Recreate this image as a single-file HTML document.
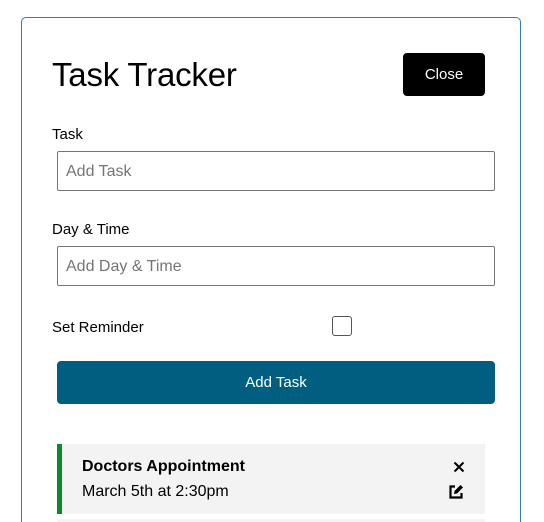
<!DOCTYPE html>
<html style="width:544px;height:522px;overflow:hidden"><head><style>
*{box-sizing:border-box;margin:0;padding:0}
body{width:544px;height:522px;overflow:hidden;background:#fff;font-family:"Liberation Sans",sans-serif;color:#000;position:relative}
.c{position:absolute;left:21px;top:17px;width:500px;height:520px;border:1px solid #2f7fb3;border-radius:5px}
.a{position:absolute}
h1{position:absolute;left:52px;top:56px;font-size:33px;font-weight:400;letter-spacing:-0.2px}
.close{left:403px;top:53px;width:82px;height:43px;background:#000;color:#fff;border-radius:4px;font-size:15px;text-align:center;line-height:44px}
.lbl{left:52px;font-size:15px}
.in{left:57px;width:438px;height:40px;border:1px solid #767676;border-radius:2px;font-size:16px;color:#757575;padding-left:8px;line-height:39px}
.btn{left:57px;top:361px;width:438px;height:43px;background:#005f80;color:#fff;border-radius:4px;font-size:15px;text-align:center;line-height:44px}
.task{left:57px;top:444px;width:428px;height:70px;background:#f3f3f3;border-left:5px solid #0a8a2a}
.task2{left:57px;top:519px;width:428px;height:3px;background:#f3f3f3}
</style></head><body>
<div class="c"></div>
<h1>Task Tracker</h1>
<div class="a close">Close</div>
<div class="a lbl" style="top:126px">Task</div>
<div class="a in" style="top:151px">Add Task</div>
<div class="a lbl" style="top:221px">Day &amp; Time</div>
<div class="a in" style="top:246px">Add Day &amp; Time</div>
<div class="a lbl" style="top:319px">Set Reminder</div>
<div class="a" style="left:332px;top:316px;width:20px;height:20px;border:1px solid #555;border-radius:3px"></div>
<div class="a btn">Add Task</div>
<div class="a task">
<div class="a" style="left:20px;top:14px;font-size:16px;font-weight:bold">Doctors Appointment</div>
<div class="a" style="left:20px;top:39px;font-size:16px">March 5th at 2:30pm</div>
<svg class="a" style="left:391px;top:17px" width="12" height="12" viewBox="0 0 12 12"><path d="M1.5 1.5L10.5 10.5M10.5 1.5L1.5 10.5" stroke="#000" stroke-width="2"/></svg>
<svg class="a" style="left:386px;top:39px" width="17" height="17" viewBox="0 0 17 17"><path d="M7 3.5H2.5V14.5H13.5V10" fill="none" stroke="#000" stroke-width="2.2"/><path d="M6 11L6.5 8L12.5 2L15 4.5L9 10.5Z" fill="#000"/></svg>
</div>
<div class="a task2"></div>
</body></html>
